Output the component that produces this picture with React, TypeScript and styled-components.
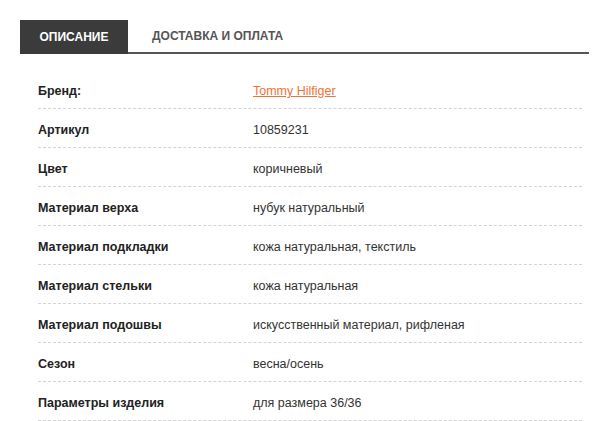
import React from "react";
import styled, { createGlobalStyle } from "styled-components";

const Global = createGlobalStyle`
  html, body { margin: 0; padding: 0; background: #fff; }
  body { font-family: "Liberation Sans", Arial, sans-serif; }
`;

const Page = styled.div`
  padding: 20px 13px 0 20px;
`;

const Tabs = styled.div`
  display: flex;
  border-bottom: 2px solid #555;
  height: 32px;
`;

const Tab = styled.div<{ $active?: boolean }>`
  display: flex;
  align-items: center;
  justify-content: center;
  padding: 0 ${(p) => (p.$active ? "19px" : "24px")};
  width: ${(p) => (p.$active ? "108px" : "auto")};
  box-sizing: border-box;
  background: ${(p) => (p.$active ? "#3b3b3b" : "transparent")};
  color: ${(p) => (p.$active ? "#fff" : "#555")};
  font-size: 12px;
  font-weight: bold;
  text-transform: uppercase;
  margin-bottom: ${(p) => (p.$active ? "-2px" : "0")};
`;

const Table = styled.div`
  margin: 16px 7px 0 18px;
`;

const Row = styled.div`
  display: grid;
  grid-template-columns: 215px 1fr;
  align-items: center;
  box-sizing: border-box;
  height: 39px;
  padding-top: 4px;
  border-bottom: 1px dashed #d4d4d4;
  font-size: 12.5px;
`;

const Label = styled.div`
  color: #222;
  font-weight: bold;
`;

const Value = styled.div`
  color: #333;
`;

const Link = styled.a`
  color: #f37134;
  text-decoration: underline;
`;

const rows: [string, string][] = [
  ["Артикул", "10859231"],
  ["Цвет", "коричневый"],
  ["Материал верха", "нубук натуральный"],
  ["Материал подкладки", "кожа натуральная, текстиль"],
  ["Материал стельки", "кожа натуральная"],
  ["Материал подошвы", "искусственный материал, рифленая"],
  ["Сезон", "весна/осень"],
  ["Параметры изделия", "для размера 36/36"],
];

export default function App() {
  return (
    <>
      <Global />
      <Page>
        <Tabs>
          <Tab $active>Описание</Tab>
          <Tab>Доставка и оплата</Tab>
        </Tabs>
        <Table>
          <Row>
            <Label>Бренд:</Label>
            <Value>
              <Link>Tommy Hilfiger</Link>
            </Value>
          </Row>
          {rows.map(([l, v]) => (
            <Row key={l}>
              <Label>{l}</Label>
              <Value>{v}</Value>
            </Row>
          ))}
        </Table>
      </Page>
    </>
  );
}
